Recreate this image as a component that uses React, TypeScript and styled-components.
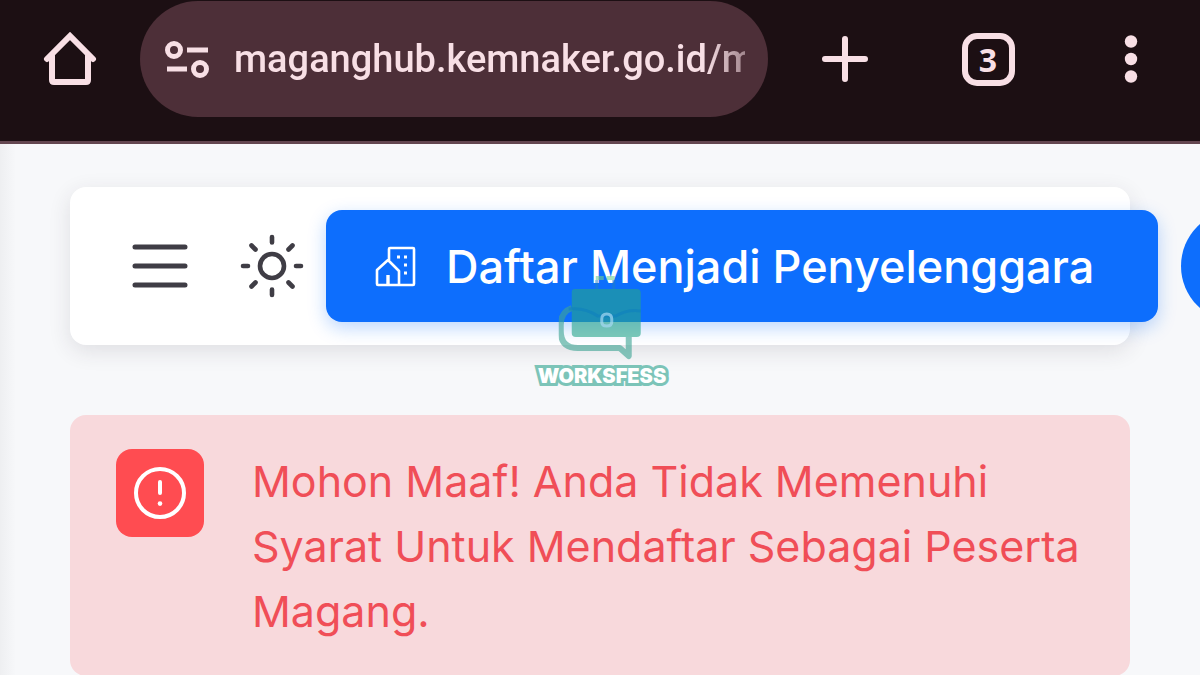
import React from "react";
import styled, { createGlobalStyle } from "styled-components";

const GlobalStyle = createGlobalStyle`
  * { box-sizing: border-box; }
  body {
    margin: 0;
    background: #f7f8fa;
    overflow-x: hidden;
    font-family: Inter, "Liberation Sans", sans-serif;
  }
  button { border: 0; padding: 0; background: none; cursor: pointer; }
`;

const Screen = styled.div`
  position: relative;
  min-height: 100vh;
  overflow: hidden;
`;

const BrowserBar = styled.header`
  display: flex;
  align-items: center;
  padding: 1px 33px 24px 34px;
  background: #1c0f13;
  border-bottom: 3px solid #634650;
  color: #f8dfe5;
`;

const BarButton = styled.button`
  display: flex;
  flex: none;
  align-items: center;
  justify-content: center;
  width: 72px;
  height: 72px;
  color: inherit;
`;

const BarActions = styled.div`
  display: flex;
  gap: 71px;
  margin-left: 41px;
`;

const AddressPill = styled.div`
  display: flex;
  flex: 1;
  align-items: center;
  gap: 24px;
  min-width: 0;
  height: 116px;
  margin-left: 34px;
  padding: 0 23px;
  border-radius: 58px;
  background: #4d2f38;
`;

const AddressInput = styled.input`
  flex: 1;
  min-width: 0;
  height: 64px;
  padding: 0;
  border: 0;
  outline: 0;
  background: none;
  color: #f8dfe5;
  font: 500 38px Roboto, "Liberation Sans", sans-serif;
  mask-image: linear-gradient(to right, #000 calc(100% - 40px), rgba(0, 0, 0, 0.5));
`;

const TabCount = styled.span`
  display: flex;
  align-items: center;
  justify-content: center;
  width: 53px;
  height: 53px;
  border: 6px solid currentColor;
  border-radius: 15px;
  font: 700 32px "Open Sans", sans-serif;
`;

const Content = styled.main`
  display: flex;
  flex-direction: column;
  gap: 70px;
  padding: 43px 70px 0;
  background: linear-gradient(to right, #eeeff1, #f7f8fa 16px);
`;

const NavCard = styled.nav`
  display: flex;
  align-items: center;
  height: 158px;
  padding-left: 62px;
  border-radius: 16px;
  background: #fff;
  box-shadow: 0 6px 22px rgba(47, 43, 61, 0.12);
`;

const NavButton = styled.button<{ $gap: number }>`
  display: flex;
  flex: none;
  margin-right: ${(p) => p.$gap}px;
  color: #3f3d45;
`;

const RegisterButton = styled.button`
  display: flex;
  flex: none;
  align-items: center;
  gap: 30px;
  height: 112px;
  padding: 0 64px 0 49px;
  border-radius: 16px;
  background: #0d6efd;
  box-shadow: 0 6px 18px rgba(13, 110, 253, 0.28);
  color: #fff;
  font: 500 45px Inter, "Liberation Sans", sans-serif;
  white-space: nowrap;
`;

const Avatar = styled.button`
  flex: none;
  width: 112px;
  height: 112px;
  margin-left: 23px;
  border-radius: 50%;
  && { background: #0d6efd; }
`;

const Alert = styled.section`
  display: flex;
  align-items: flex-start;
  gap: 48px;
  padding: 34px 32px 32px 46px;
  border-radius: 16px;
  background: #f8d9dc;
`;

const AlertIcon = styled.span`
  display: flex;
  flex: none;
  align-items: center;
  justify-content: center;
  width: 88px;
  height: 88px;
  border-radius: 16px;
  background: #ff4c51;
`;

const AlertText = styled.p`
  margin: 0;
  color: #f04e57;
  font-size: 43px;
  line-height: 65px;
`;

const Watermark = styled.div`
  position: absolute;
  top: 274px;
  left: 50%;
  display: flex;
  flex-direction: column;
  align-items: center;
  gap: 2px;
  padding-left: 4px;
  transform: translateX(-50%);
  pointer-events: none;
`;

const WatermarkName = styled.span`
  color: #fff;
  font: 900 20px/28px Inter, sans-serif;
  -webkit-text-stroke: 6px #7cc4b8;
  paint-order: stroke fill;
`;

const HomeIcon = () => (
  <svg width="54" height="56" viewBox="0 0 54 56" fill="none" stroke="currentColor" strokeWidth="6" strokeLinecap="round" strokeLinejoin="round" aria-hidden>
    <path d="M4 28 27 5l23 23" strokeLinejoin="miter" />
    <path d="M9 25v24q0 2 2 2h32q2 0 2-2V25" />
  </svg>
);

const TuneIcon = () => (
  <svg width="47" height="40" viewBox="0 0 47 40" fill="none" stroke="currentColor" strokeWidth="5" aria-hidden>
    <circle cx="11" cy="11" r="6.5" />
    <path d="M24 11h21M4 30h20" />
    <circle cx="37" cy="30" r="6.5" />
  </svg>
);

const PlusIcon = () => (
  <svg width="48" height="48" viewBox="0 0 48 48" stroke="currentColor" strokeWidth="6" strokeLinecap="round" aria-hidden>
    <path d="M24 4v40M4 24h40" />
  </svg>
);

const DotsIcon = () => (
  <svg width="14" height="48" viewBox="0 0 14 48" fill="currentColor" aria-hidden>
    <circle cx="7" cy="6.5" r="6.2" />
    <circle cx="7" cy="24" r="6.2" />
    <circle cx="7" cy="41.5" r="6.2" />
  </svg>
);

const MenuIcon = () => (
  <svg width="56" height="56" viewBox="0 0 56 56" stroke="currentColor" strokeWidth="5" strokeLinecap="round" aria-hidden>
    <path d="M3 9h50M3 28h50M3 47h50" />
  </svg>
);

const SunIcon = () => (
  <svg width="64" height="64" viewBox="0 0 64 64" fill="none" stroke="currentColor" strokeWidth="4.6" strokeLinecap="round" aria-hidden>
    <circle cx="32" cy="32" r="12" />
    <path d="M32 3v5.5M32 55.500v5.500M3 32h5M56 32h5M11.500 11.500l4 4M48.500 48.500l4 4M52.500 11.500l-4 4M15.500 48.500l-4 4" />
  </svg>
);

const BuildingIcon = () => (
  <svg width="41" height="41" viewBox="0 0 41 41" fill="none" stroke="currentColor" strokeWidth="2.6" strokeLinejoin="round" aria-hidden>
    <path d="M14 14V3q0-1 1-1h23q1 0 1 1v35q0 1-1 1H3q-1 0-1-1V24l11-10 11 11v14" />
    <path d="M13 38v-9" strokeWidth="3.4" />
    <path d="M22 11h3M29 11h3M29 19h3M29 27h3" strokeWidth="3" />
  </svg>
);

const WarningIcon = () => (
  <svg width="54" height="54" viewBox="0 0 54 54" fill="none" stroke="#fff" strokeWidth="4" strokeLinecap="round" aria-hidden>
    <circle cx="27" cy="27" r="24" />
    <path d="M27 16v11" />
    <path d="M27 37.500v.1" strokeWidth="4.600" />
  </svg>
);

const BriefcaseMark = () => (
  <svg width="86" height="86" viewBox="0 0 86 86" fill="none" aria-hidden>
    <path d="M37 4h19" stroke="#6fcf8f" strokeOpacity="0.6" strokeWidth="4" strokeDasharray="8 3" />
    <path d="M38 6v9M55 6v9" stroke="#1f7fc0" strokeOpacity="0.5" strokeWidth="3" />
    <path d="M13 34Q2 38 2 51v6q0 17 17 17h42l9 8V63" stroke="#3fa595" strokeOpacity="0.62" strokeWidth="6" strokeLinejoin="round" />
    <path d="M16 15h62q4 0 4 4v40q0 4-4 4H17q-4 0-4-4V18q0-3 3-3Z" fill="#25a588" fillOpacity="0.6" />
    <path d="M10 35q16-2 29 7h18q12-7 25-5" stroke="#0c7dc0" strokeOpacity="0.5" strokeWidth="3" />
    <path d="M43 45v3q0 4 5 4t5-4v-3q0-5-5-5t-5 5Z" stroke="#a7d9f2" strokeOpacity="0.7" strokeWidth="3" />
  </svg>
);

export default function App() {
  return (
    <Screen>
      <GlobalStyle />
      <BrowserBar>
        <BarButton aria-label="Home"><HomeIcon /></BarButton>
        <AddressPill>
          <TuneIcon />
          <AddressInput aria-label="Address" type="text" defaultValue="maganghub.kemnaker.go.id/m" />
        </AddressPill>
        <BarActions>
          <BarButton aria-label="New tab"><PlusIcon /></BarButton>
          <BarButton aria-label="Tabs"><TabCount>3</TabCount></BarButton>
          <BarButton aria-label="More"><DotsIcon /></BarButton>
        </BarActions>
      </BrowserBar>
      <Content>
        <NavCard>
          <NavButton $gap={52} aria-label="Menu"><MenuIcon /></NavButton>
          <NavButton $gap={22} aria-label="Theme"><SunIcon /></NavButton>
          <RegisterButton>
            <BuildingIcon />
            Daftar Menjadi Penyelenggara
          </RegisterButton>
          <Avatar aria-label="Account" />
        </NavCard>
        <Alert role="alert">
          <AlertIcon><WarningIcon /></AlertIcon>
          <AlertText>Mohon Maaf! Anda Tidak Memenuhi Syarat Untuk Mendaftar Sebagai Peserta Magang.</AlertText>
        </Alert>
      </Content>
      <Watermark>
        <BriefcaseMark />
        <WatermarkName>WORKSFESS</WatermarkName>
      </Watermark>
    </Screen>
  );
}
